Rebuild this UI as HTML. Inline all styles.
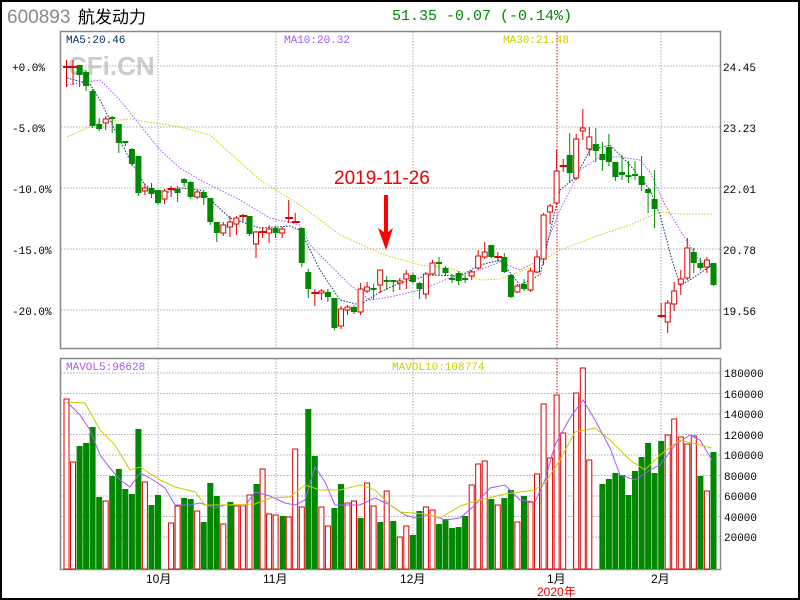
<!DOCTYPE html><html><head><meta charset="utf-8"><style>
html,body{margin:0;padding:0;background:#fff}
.w{position:relative;width:796px;height:596px;border:2px solid #000;overflow:hidden;font-family:"Liberation Mono","Noto Sans CJK SC",monospace}
</style></head><body><div class="w">
<svg width="800" height="600" viewBox="2 2 800 600" style="position:absolute;left:-2px;top:-2px;left:0;top:0" xmlns="http://www.w3.org/2000/svg" font-family="Liberation Mono, Noto Sans CJK SC, monospace">
<text x="7" y="23" font-family="Liberation Sans, sans-serif" font-size="19" fill="#888">600893</text>
<text x="78" y="23" font-family="Liberation Sans, Noto Sans CJK SC, sans-serif" font-size="17" fill="#000">航发动力</text>
<text x="392" y="20" font-size="15" fill="#080">51.35 -0.07 (-0.14%)</text>
<text x="68" y="75" font-family="Liberation Sans, sans-serif" font-weight="bold" font-size="26" fill="#ccc">CFi.CN</text>
<g fill="none" stroke="#aaa" stroke-dasharray="1.5,1.5" stroke-width="1">
<path d="M61 66H720M61 127H720M61 188H720M61 249H720M61 310H720"/>
<path d="M158 32V348M276 32V348M413 32V348M661 32V348M158 359V569M276 359V569M413 359V569M661 359V569"/>
<path d="M61 373H720M61 393.5H720M61 414H720M61 434.5H720M61 455H720M61 475.5H720M61 496H720M61 516.5H720M61 537H720"/>
</g>
<path d="M557 32V348M557 359V569" stroke="#e00" stroke-dasharray="1.5,1.5"/>
<rect x="60.5" y="31.5" width="660" height="317" fill="none" stroke="#888" stroke-width="1.5"/>
<rect x="60.5" y="358.5" width="660" height="211" fill="none" stroke="#888" stroke-width="1.5"/>
<g font-size="11" fill="#000">
<text x="12" y="71">+0.0%</text><text x="12" y="132">-5.0%</text><text x="12" y="193">-10.0%</text><text x="12" y="254">-15.0%</text><text x="12" y="315">-20.0%</text>
<text x="723" y="71">24.45</text><text x="723" y="132">23.23</text><text x="723" y="193">22.01</text><text x="723" y="254">20.78</text><text x="723" y="315">19.56</text>
<text x="724" y="377">180000</text><text x="724" y="398">160000</text><text x="724" y="418">140000</text><text x="724" y="439">120000</text><text x="724" y="459">100000</text><text x="724" y="480">80000</text><text x="724" y="500">60000</text><text x="724" y="521">40000</text><text x="724" y="541">20000</text>
</g>
<g font-size="11"><text x="66" y="43" fill="#036">MA5:20.46</text><text x="284" y="43" fill="#a5f">MA10:20.32</text><text x="503" y="43" fill="#cc0">MA30:21.48</text>
<text x="66" y="370" fill="#a5f">MAVOL5:96628</text><text x="392" y="370" fill="#cc0">MAVOL10:108774</text></g>
<g font-family="Liberation Sans, Noto Sans CJK SC, sans-serif" font-size="12" fill="#000"><text x="146" y="583">10月</text><text x="263" y="583">11月</text><text x="400" y="583">12月</text><text x="547" y="583">1月</text><text x="651" y="583">2月</text></g>
<text x="537" y="596" font-family="Liberation Sans, Noto Sans CJK SC, sans-serif" font-size="12" fill="#e00">2020年</text>
<text x="334" y="184" font-size="19" fill="#e00" font-family="Liberation Sans, sans-serif">2019-11-26</text>
<path d="M384 195H388V232L393 228L386 250L378 228L384 232Z" fill="#f00"/>
<g fill="none" stroke-width="1" stroke-dasharray="1.5,1.5">
<polyline stroke="#cc0" points="67,137 100,122 130,119 180,127 210,135 260,180 300,205 340,235 385,255 420,265 450,268 480,280 500,279 530,268 560,250 600,235 630,225 650,216 660,212 680,214 712,214"/>
<polyline stroke="#a5f" points="67,85 100,80 120,100 140,125 160,150 180,168 200,180 240,200 270,218 300,225 310,245 330,265 350,285 370,300 390,297 420,290 450,278 480,270 500,262 520,270 540,260 560,210 580,170 600,157 620,157 640,160 650,172 665,205 680,230 700,262 712,265"/>
<polyline stroke="#036" points="67,78 90,84 100,100 115,130 130,160 145,185 160,195 180,188 200,190 230,218 260,228 290,226 300,230 320,270 340,300 360,305 380,292 400,283 430,275 460,276 480,265 500,260 520,285 540,275 560,190 575,178 590,150 610,145 630,165 650,190 660,215 672,260 680,285 690,280 712,265"/>
</g>
<path stroke="#d00" stroke-width="1" fill="none" d="M66.5 60V87M73 60V85M105.7 116V130M144.9 183V195M164.5 189V204M171.1 186V197M197.2 190V199M223.3 222V236M229.9 216V237M236.4 216V235M242.9 214V222M256 231V258M262.6 227V238M269.1 225V243M282.2 227V238M288.7 200V223M295.2 213V223M314.8 289V306M321.4 289V300M341 306V329M347.5 305V315M360.6 283V315M367.1 282V293M380.2 270V293M399.8 278V290M406.3 270V289M425.9 272V299M432.5 260V275M471.7 270V280M478.2 250V270M484.7 242V259M497.8 252V262M517.4 284V293M530.5 268V292M537 250V273M543.6 213V265M550.1 204V224M556.6 150V205M563.2 159V172M576.2 134V180M582.8 109V140M589.3 127V156M661.2 303V318M667.7 300V333M674.2 282V311M680.8 270V295M687.3 238V280M706.9 257V273"/>
<path stroke="#080" stroke-width="1" fill="none" d="M79.6 65V87M86.1 70V91M92.6 89V128M99.2 118V131M112.2 116V133M118.8 124V153M125.3 141V146M131.9 148V166M138.4 156V196M151.5 183V198M158 190V205M177.6 186V202M184.1 178V187M190.7 181V199M203.7 190V205M210.3 198V225M216.8 222V242M249.5 216V236M275.6 226V238M301.8 228V267M308.3 269V298M327.9 289V302M334.4 298V330M354 305V314M373.6 284V300M386.7 276V290M393.3 280V292M412.9 273V284M419.4 282V299M439 257V276M445.5 266V276M452.1 274V283M458.6 271V285M465.1 275V283M491.3 245V258M504.3 253V273M510.9 274V298M524 279V291M569.7 133V182M595.8 128V162M602.4 142V171M608.9 134V166M615.4 162V181M622 155V180M628.5 161V183M635 161V180M641.6 156V191M648.1 189V213M654.6 170V228M693.8 248V273M700.4 258V270M713.5 263V286"/>
<g fill="#fff" stroke="#d00" stroke-width="1">
<rect x="103.2" y="119" width="5" height="4"/><rect x="142.4" y="188" width="5" height="3"/><rect x="162" y="191" width="5" height="8"/><rect x="194.7" y="192" width="5" height="5"/><rect x="220.8" y="225" width="5" height="8"/><rect x="227.4" y="222" width="5" height="5"/><rect x="233.9" y="218" width="5" height="6"/><rect x="253.5" y="232" width="5" height="12"/><rect x="266.6" y="229" width="5" height="4"/><rect x="279.7" y="229" width="5" height="4"/><rect x="318.9" y="291" width="5" height="2"/><rect x="338.5" y="309" width="5" height="17"/><rect x="345" y="307" width="5" height="3"/><rect x="358.1" y="289" width="5" height="23"/><rect x="364.6" y="287" width="5" height="4"/><rect x="377.7" y="270" width="5" height="15"/><rect x="397.3" y="281" width="5" height="2"/><rect x="403.8" y="274" width="5" height="5"/><rect x="423.4" y="274" width="5" height="20"/><rect x="430" y="263" width="5" height="11"/><rect x="469.2" y="272" width="5" height="4"/><rect x="475.7" y="256" width="5" height="12"/><rect x="482.2" y="252" width="5" height="5"/><rect x="514.9" y="286" width="5" height="6"/><rect x="528" y="271" width="5" height="19"/><rect x="534.5" y="257" width="5" height="15"/><rect x="541.1" y="215" width="5" height="44"/><rect x="547.6" y="206" width="5" height="6"/><rect x="554.1" y="171" width="5" height="32"/><rect x="573.7" y="139" width="5" height="39"/><rect x="580.3" y="128" width="5" height="3"/><rect x="586.8" y="137" width="5" height="12"/><rect x="665.2" y="303" width="5" height="19"/><rect x="671.7" y="291" width="5" height="13"/><rect x="678.3" y="279" width="5" height="5"/><rect x="684.8" y="248" width="5" height="30"/><rect x="704.4" y="260" width="5" height="7"/>
</g>
<g fill="#d00"><rect x="63" y="66" width="8" height="2"/><rect x="69.5" y="66" width="8" height="2"/><rect x="167.6" y="188" width="8" height="2"/><rect x="239.4" y="215" width="8" height="2"/><rect x="259.1" y="231" width="8" height="2"/><rect x="285.2" y="217" width="8" height="2"/><rect x="291.7" y="221" width="8" height="2"/><rect x="311.3" y="292" width="8" height="2"/><rect x="494.3" y="256" width="8" height="2"/><rect x="559.7" y="165" width="8" height="2"/><rect x="657.7" y="315" width="8" height="2"/></g>
<g fill="#080">
<rect x="76.6" y="65" width="6" height="10"/><rect x="83.1" y="72" width="6" height="14"/><rect x="89.6" y="91" width="6" height="35"/><rect x="96.2" y="124" width="6" height="5"/><rect x="109.2" y="117" width="6" height="2"/><rect x="115.8" y="124" width="6" height="19"/><rect x="122.3" y="141" width="6" height="2"/><rect x="128.9" y="149" width="6" height="15"/><rect x="135.4" y="156" width="6" height="37"/><rect x="148.5" y="188" width="6" height="6"/><rect x="155" y="190" width="6" height="13"/><rect x="174.6" y="189" width="6" height="4"/><rect x="181.1" y="179" width="6" height="4"/><rect x="187.7" y="182" width="6" height="15"/><rect x="200.7" y="192" width="6" height="6"/><rect x="207.3" y="198" width="6" height="24"/><rect x="213.8" y="222" width="6" height="11"/><rect x="246.5" y="216" width="6" height="18"/><rect x="272.6" y="228" width="6" height="5"/><rect x="298.8" y="228" width="6" height="35"/><rect x="305.3" y="272" width="6" height="17"/><rect x="324.9" y="292" width="6" height="5"/><rect x="331.4" y="298" width="6" height="30"/><rect x="351" y="307" width="6" height="5"/><rect x="370.6" y="288" width="6" height="2"/><rect x="383.7" y="280" width="6" height="2"/><rect x="390.3" y="280" width="6" height="2"/><rect x="409.9" y="275" width="6" height="7"/><rect x="416.4" y="283" width="6" height="6"/><rect x="436" y="262" width="6" height="2"/><rect x="442.5" y="268" width="6" height="5"/><rect x="449.1" y="278" width="6" height="2"/><rect x="455.6" y="273" width="6" height="8"/><rect x="462.1" y="278" width="6" height="2"/><rect x="488.3" y="245" width="6" height="12"/><rect x="501.3" y="257" width="6" height="15"/><rect x="507.9" y="275" width="6" height="22"/><rect x="521" y="284" width="6" height="5"/><rect x="566.7" y="155" width="6" height="18"/><rect x="592.8" y="144" width="6" height="7"/><rect x="599.4" y="154" width="6" height="6"/><rect x="605.9" y="147" width="6" height="15"/><rect x="612.4" y="162" width="6" height="15"/><rect x="619" y="172" width="6" height="3"/><rect x="625.5" y="175" width="6" height="2"/><rect x="632" y="174" width="6" height="2"/><rect x="638.6" y="176" width="6" height="9"/><rect x="645.1" y="189" width="6" height="4"/><rect x="651.6" y="199" width="6" height="10"/><rect x="690.8" y="252" width="6" height="11"/><rect x="697.4" y="263" width="6" height="5"/><rect x="710.5" y="263" width="6" height="22"/>
</g>
<g fill="#080">
<rect x="76.6" y="446" width="6" height="123"/><rect x="83.1" y="443" width="6" height="126"/><rect x="89.6" y="427" width="6" height="142"/><rect x="96.2" y="497" width="6" height="72"/><rect x="109.2" y="476" width="6" height="93"/><rect x="115.8" y="469" width="6" height="100"/><rect x="122.3" y="489" width="6" height="80"/><rect x="128.9" y="494" width="6" height="75"/><rect x="135.4" y="429" width="6" height="140"/><rect x="148.5" y="505" width="6" height="64"/><rect x="155" y="495" width="6" height="74"/><rect x="174.6" y="507" width="6" height="62"/><rect x="181.1" y="498" width="6" height="71"/><rect x="187.7" y="499" width="6" height="70"/><rect x="200.7" y="522" width="6" height="47"/><rect x="207.3" y="483" width="6" height="86"/><rect x="213.8" y="496" width="6" height="73"/><rect x="227.4" y="502" width="6" height="67"/><rect x="253.5" y="484" width="6" height="85"/><rect x="279.7" y="516" width="6" height="53"/><rect x="305.3" y="409" width="6" height="160"/><rect x="311.8" y="456" width="6" height="113"/><rect x="331.4" y="508" width="6" height="61"/><rect x="338" y="484" width="6" height="85"/><rect x="357.6" y="518" width="6" height="51"/><rect x="377.2" y="522" width="6" height="47"/><rect x="390.3" y="521" width="6" height="48"/><rect x="409.9" y="535" width="6" height="34"/><rect x="416.4" y="511" width="6" height="58"/><rect x="436" y="524" width="6" height="45"/><rect x="442.5" y="519" width="6" height="50"/><rect x="449.1" y="528" width="6" height="41"/><rect x="455.6" y="527" width="6" height="42"/><rect x="462.1" y="516" width="6" height="53"/><rect x="488.3" y="499" width="6" height="70"/><rect x="501.3" y="498" width="6" height="71"/><rect x="507.9" y="490" width="6" height="79"/><rect x="521" y="496" width="6" height="73"/><rect x="573.2" y="397" width="6" height="172"/><rect x="599.4" y="484" width="6" height="85"/><rect x="605.9" y="479" width="6" height="90"/><rect x="612.4" y="473" width="6" height="96"/><rect x="619" y="475" width="6" height="94"/><rect x="625.5" y="495" width="6" height="74"/><rect x="632" y="471" width="6" height="98"/><rect x="638.6" y="457" width="6" height="112"/><rect x="645.1" y="443" width="6" height="126"/><rect x="651.6" y="473" width="6" height="96"/><rect x="658.2" y="441" width="6" height="128"/><rect x="690.8" y="446" width="6" height="123"/><rect x="697.4" y="476" width="6" height="93"/><rect x="710.5" y="452" width="6" height="117"/>
</g>
<g fill="#fff" stroke="#d00" stroke-width="1">
<rect x="64" y="399" width="5" height="170"/><rect x="70.5" y="462" width="5" height="107"/><rect x="103.2" y="501" width="5" height="68"/><rect x="142.4" y="482" width="5" height="87"/><rect x="168.6" y="523" width="5" height="46"/><rect x="175.1" y="506" width="5" height="63"/><rect x="194.7" y="511" width="5" height="58"/><rect x="220.8" y="524" width="5" height="45"/><rect x="233.9" y="506" width="5" height="63"/><rect x="240.4" y="506" width="5" height="63"/><rect x="247" y="495" width="5" height="74"/><rect x="260.1" y="469" width="5" height="100"/><rect x="266.6" y="514" width="5" height="55"/><rect x="273.1" y="515" width="5" height="54"/><rect x="286.2" y="517" width="5" height="52"/><rect x="292.7" y="449" width="5" height="120"/><rect x="299.3" y="507" width="5" height="62"/><rect x="318.9" y="507" width="5" height="62"/><rect x="325.4" y="526" width="5" height="43"/><rect x="345" y="503" width="5" height="66"/><rect x="351.5" y="501" width="5" height="68"/><rect x="364.6" y="483" width="5" height="86"/><rect x="371.1" y="506" width="5" height="63"/><rect x="384.2" y="491" width="5" height="78"/><rect x="397.3" y="537" width="5" height="32"/><rect x="403.8" y="526" width="5" height="43"/><rect x="423.4" y="507" width="5" height="62"/><rect x="430" y="510" width="5" height="59"/><rect x="469.2" y="485" width="5" height="84"/><rect x="475.7" y="464" width="5" height="105"/><rect x="482.2" y="461" width="5" height="108"/><rect x="495.3" y="505" width="5" height="64"/><rect x="514.9" y="522" width="5" height="47"/><rect x="528" y="502" width="5" height="67"/><rect x="534.5" y="474" width="5" height="95"/><rect x="541.1" y="404" width="5" height="165"/><rect x="547.6" y="458" width="5" height="111"/><rect x="554.1" y="395" width="5" height="174"/><rect x="560.7" y="433" width="5" height="136"/><rect x="573.7" y="393" width="5" height="176"/><rect x="580.3" y="368" width="5" height="201"/><rect x="586.8" y="460" width="5" height="109"/><rect x="665.2" y="435" width="5" height="134"/><rect x="671.7" y="419" width="5" height="150"/><rect x="678.3" y="437" width="5" height="132"/><rect x="684.8" y="444" width="5" height="125"/><rect x="691.3" y="436" width="5" height="133"/><rect x="704.4" y="491" width="5" height="78"/>
</g>
<g fill="none" stroke-width="1">
<polyline stroke="#a5f" points="67,402 80,415 90,430 100,455 110,468 120,480 130,487 140,473 150,478 165,488 175,505 190,505 200,503 215,508 225,505 245,506 255,492 270,496 285,503 295,505 305,500 315,467 325,482 335,505 360,505 375,498 390,505 405,515 415,518 430,515 445,520 460,518 475,505 490,488 505,485 520,500 535,502 545,480 555,445 570,418 583,400 595,420 610,448 620,475 635,480 650,470 660,465 675,445 690,435 700,440 712,460"/>
<polyline stroke="#cc0" points="67,402 85,403 100,430 115,445 130,470 140,467 160,480 175,487 195,492 205,505 225,505 255,504 270,498 290,497 305,485 320,490 340,490 360,485 375,490 390,505 400,512 425,514 440,518 460,506 480,500 505,494 535,490 545,483 560,460 575,432 595,428 610,440 630,460 645,470 660,455 680,440 700,445 712,448"/>
</g>
</svg></div></body></html>
